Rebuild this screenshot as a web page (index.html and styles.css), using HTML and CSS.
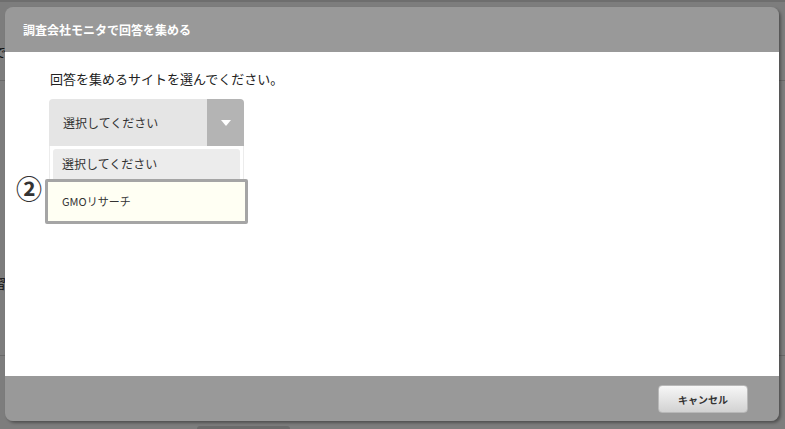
FILE: index.html
```html
<!DOCTYPE html>
<html lang="ja">
<head>
<meta charset="utf-8">
<title>調査会社モニタで回答を集める</title>
<link rel="stylesheet" href="styles.css">
</head>
<body>
<div class="page">
  <div class="page-top"></div>
  <div class="page-row page-row-1"><span class="frag">で</span></div>
  <div class="page-row page-row-2"><span class="frag">習</span></div>
  <div class="page-btn"></div>
</div>
<div class="overlay"></div>

<div class="dialog">
  <div class="dialog-header">調査会社モニタで回答を集める</div>
  <div class="dialog-body">
    <p class="lead">回答を集めるサイトを選んでください。</p>
    <div class="select">
      <div class="select-value">選択してください</div>
      <div class="select-arrow"><span class="tri"></span></div>
    </div>
    <div class="options">
      <div class="option option-first">選択してください</div>
      <div class="option option-blank"></div>
    </div>
  </div>
  <div class="dialog-footer">
    <button class="btn-cancel">キャンセル</button>
  </div>
</div>

<div class="callout-num">②</div>
<div class="callout">GMOリサーチ</div>
</body>
</html>
```

FILE: styles.css
```css
html, body {
  margin: 0;
  padding: 0;
}
body {
  width: 785px;
  height: 429px;
  overflow: hidden;
  position: relative;
  background: #ffffff;
  font-family: "Noto Sans CJK JP", "Noto Sans", sans-serif;
}

/* underlying page (dimmed) */
.page {
  width: 785px;
  height: 429px;
  background: #fafafa;
}
.page-top {
  height: 2px;
  background: #dcdcdc;
}
.page-row {
  border-bottom: 1px solid #d2d2d2;
  position: relative;
}
.page-row-1 { height: 78px; }
.page-row-2 { height: 274px; }
.frag {
  font-size: 13px;
  color: #222;
  position: absolute;
  left: -7px;
}
.page-row-1 .frag { top: 40px; }
.page-row-2 .frag { top: 192px; }
.page-btn {
  margin: 70px 0 0 197px;
  width: 93px;
  height: 10px;
  background: #d6d6d6;
  border-radius: 3px;
}

.overlay {
  position: absolute;
  inset: 0;
  background: rgba(0, 0, 0, 0.5);
}

/* dialog */
.dialog {
  position: absolute;
  left: 5px;
  top: 7px;
  width: 774px;
  height: 414px;
  border-radius: 8px;
  overflow: hidden;
  display: flex;
  flex-direction: column;
  box-shadow: 2px 2px 3px rgba(0, 0, 0, 0.35);
}
.dialog-header {
  height: 45px;
  line-height: 45px;
  background: #999999;
  color: #ffffff;
  font-size: 12px;
  font-weight: bold;
  padding-left: 18px;
  box-sizing: border-box;
}
.dialog-body {
  flex: 1;
  background: #ffffff;
  padding: 17px 0 0 44px;
}
.lead {
  margin: 0 0 0 1px;
  font-size: 13px;
  line-height: 19px;
  color: #222;
}
.select {
  margin-top: 11px;
  width: 195px;
  height: 47px;
  display: flex;
  border-radius: 4px 4px 0 0;
  overflow: hidden;
}
.select-value {
  flex: 1;
  background: #e5e5e5;
  color: #333;
  font-size: 12px;
  line-height: 47px;
  padding-left: 14px;
}
.select-arrow {
  width: 37px;
  background: #b4b4b4;
  display: flex;
  align-items: center;
  justify-content: center;
}
.tri {
  width: 0;
  height: 0;
  border-left: 5px solid transparent;
  border-right: 5px solid transparent;
  border-top: 6px solid #ffffff;
}
.options {
  width: 195px;
  box-sizing: border-box;
  border: 1px solid #ececec;
  border-top: none;
  padding: 3px 3px 0 3px;
  height: 76px;
}
.option {
  font-size: 12px;
  color: #333;
  padding-left: 9px;
}
.option-first {
  background: #ececec;
  border-radius: 3px 3px 0 0;
  height: 34px;
  line-height: 30px;
}

.dialog-footer {
  height: 45px;
  background: #999999;
  display: flex;
  justify-content: flex-end;
  align-items: flex-start;
  padding: 9px 31px 0 0;
  box-sizing: border-box;
}
.btn-cancel {
  width: 90px;
  height: 28px;
  border: 1px solid #b8b8b8;
  border-radius: 4px;
  background: linear-gradient(#f7f7f7, #d2d2d2);
  font-family: "Noto Sans CJK JP", "Noto Sans", sans-serif;
  font-size: 10px;
  font-weight: bold;
  color: #333;
  padding: 0;
}

/* annotation overlay */
.callout-num {
  position: absolute;
  left: 16px;
  top: 171px;
  font-size: 26px;
  font-weight: bold;
  line-height: 34px;
  color: #333;
}
.callout {
  position: absolute;
  left: 45px;
  top: 179px;
  width: 203px;
  height: 45px;
  box-sizing: border-box;
  border: 3px solid #a5a5a5;
  border-radius: 2px;
  background: #fffff3;
  font-size: 11px;
  color: #333;
  line-height: 39px;
  padding-left: 14px;
}
```
